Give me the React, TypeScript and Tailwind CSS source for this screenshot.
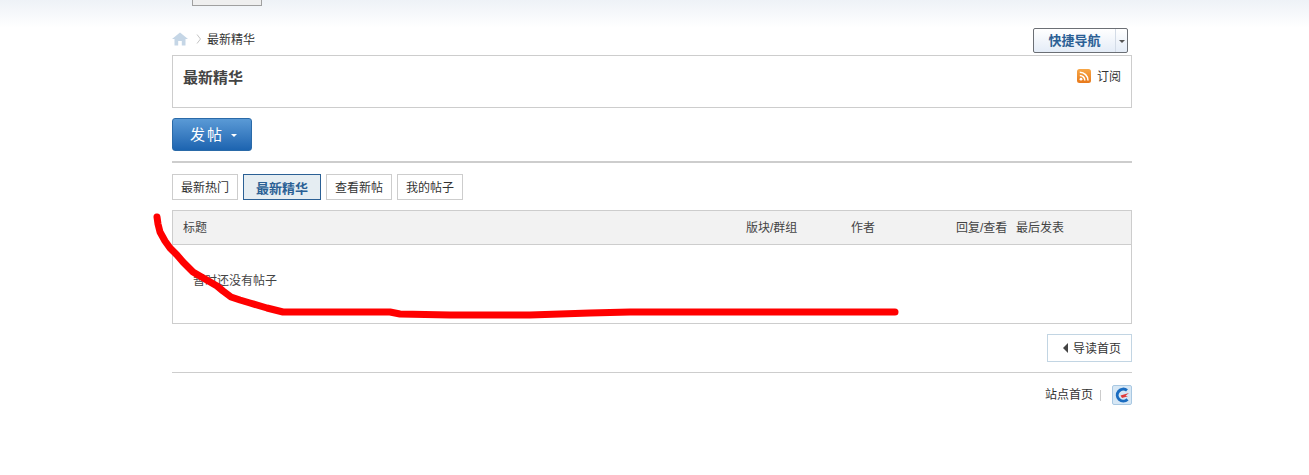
import React from "react";

const font = { fontFamily: '"Liberation Sans", "Noto Sans CJK SC", sans-serif' };

const stroke =
  "M157,217 L158,224 L160,232 L165,241 L170,248 L177,255 L183,262 L193,272 L205,279 L217,286 L223,291 L231,297 L240,300 L250,303 L267,308 L283,312 L320,312 L390,312 L400,314 L450,315 L530,315 L590,313 L630,312 L720,312 L895,312";

function Tab({ label, active, w }: { label: string; active?: boolean; w: string }) {
  return (
    <div
      className={
        active
          ? `${w} h-[26px] flex items-center justify-center pt-[2px] border border-[#2b6095] bg-[#e5edf2] text-[#2b6095] text-[13px] font-bold`
          : `${w} h-[26px] flex items-center justify-center pt-[2px] border border-[#cdcdcd] bg-white text-[#333]`
      }
    >
      {label}
    </div>
  );
}

export default function App() {
  return (
    <div
      style={font}
      className="relative h-[475px] overflow-hidden bg-white bg-gradient-to-b from-[#eef2f7] to-white bg-no-repeat bg-[length:100%_28px] text-[12px] leading-none text-[#333]"
    >
      <div className="ml-[172px] w-[960px]">
        <div className="h-[28px]">
          <div className="ml-[20px] w-[70px] h-[6px] border border-t-0 border-[#a0a0a0] bg-[#efefef]" />
        </div>

        <div className="h-[27px] flex items-start justify-between">
          <div className="flex items-center h-[24px]">
            <svg width="16" height="14" viewBox="0 0 16 14" className="-mt-[2px]">
              <path d="M8 0.5 L16 7 L13.5 7 L13.5 13.5 L9.8 13.5 L9.8 9 L6.2 9 L6.2 13.5 L2.5 13.5 L2.5 7 L0 7 Z" fill="#c5d6e6" />
            </svg>
            <svg width="6" height="10" viewBox="0 0 6 10" className="ml-[8px] -mt-[2px]">
              <path d="M1 0.5 L4.5 5 L1 9.5" fill="none" stroke="#c4c4c4" />
            </svg>
            <span className="ml-[5px] text-[#333]">最新精华</span>
          </div>
          <div className="mr-[4px] w-[95px] h-[25px] flex rounded-[2px] border border-[#6b6f75] bg-gradient-to-b from-white to-[#e4ecf7]">
            <div className="w-[81px] flex items-center justify-center font-bold text-[13px] text-[#2b6095]">快捷导航</div>
            <div className="flex-1 flex items-center justify-center border-l border-[#d3dbe6]">
              <div className="w-0 h-0 mt-[2px] border-x-[3px] border-x-transparent border-t-[3px] border-t-[#555]" />
            </div>
          </div>
        </div>

        <div className="h-[53px] border border-[#cdcdcd] bg-white flex justify-between items-start pt-[13px] pl-[10px] pr-[10px]">
          <div className="mt-[1px] text-[15px] leading-[16px] font-bold text-[#444]">最新精华</div>
          <div className="flex items-center">
            <svg width="14" height="14" viewBox="0 0 14 14">
              <defs>
                <linearGradient id="rss" x1="0" y1="0" x2="0" y2="1">
                  <stop offset="0" stopColor="#f7a748" />
                  <stop offset="1" stopColor="#e8791a" />
                </linearGradient>
              </defs>
              <rect x="0" y="0" width="14" height="14" rx="2.5" fill="url(#rss)" />
              <circle cx="4" cy="10.2" r="1.4" fill="#fff" />
              <path d="M2.8 6.4 A5 5 0 0 1 7.8 11.4" fill="none" stroke="#fff" strokeWidth="1.5" />
              <path d="M2.8 3.2 A8.2 8.2 0 0 1 11 11.4" fill="none" stroke="#fff" strokeWidth="1.5" />
            </svg>
            <span className="ml-[6px] pt-[2px] text-[#333]">订阅</span>
          </div>
        </div>

        <div className="mt-[10px] w-[80px] h-[33px] rounded-[3px] border border-[#2a6aa8] bg-gradient-to-b from-[#5a9ad6] to-[#1c64b0] flex items-center pl-[17px] text-white text-[15px] tracking-[2px]">
          <span>发帖</span>
          <div className="ml-[7px] mt-[2px] w-0 h-0 border-x-[3px] border-x-transparent border-t-[3px] border-t-white" />
        </div>

        <div className="mt-[10px] h-[2px] bg-[#cdcdcd]" />

        <div className="mt-[11px] flex gap-[5px]">
          <Tab label="最新热门" w="w-[66px]" />
          <Tab label="最新精华" w="w-[78px]" active />
          <Tab label="查看新帖" w="w-[66px]" />
          <Tab label="我的帖子" w="w-[66px]" />
        </div>

        <div className="mt-[10px] h-[114px] border border-[#cdcdcd] bg-white">
          <div className="h-[34px] flex items-center bg-[#f2f2f2] border-b border-[#cdcdcd] text-[#444] pt-[1px]">
            <div className="w-[573px] pl-[10px]">标题</div>
            <div className="w-[105px]">版块/群组</div>
            <div className="w-[105px]">作者</div>
            <div className="w-[60px]">回复/查看</div>
            <div>最后发表</div>
          </div>
          <div className="pl-[20px] pt-[30px] text-[#444]">暂时还没有帖子</div>
        </div>

        <div className="mt-[10px] flex justify-end">
          <div className="w-[85px] h-[28px] border border-[#c2d5e3] bg-white flex items-center pl-[15px] text-[#333]">
            <div className="w-0 h-0 border-y-[5px] border-y-transparent border-r-[5px] border-r-[#444]" />
            <span className="ml-[5px] pt-[2px]">导读首页</span>
          </div>
        </div>

        <div className="mt-[10px] h-[1px] bg-[#cdcdcd]" />

        <div className="mt-[12px] flex justify-end items-center h-[20px]">
          <span className="text-[#333]">站点首页</span>
          <div className="ml-[7px] w-[1px] h-[11px] bg-[#ccc]" />
          <svg width="20" height="20" viewBox="0 0 20 20" className="ml-[11px]">
            <rect x="0.5" y="0.5" width="19" height="19" rx="1.5" fill="#d6e7f5" stroke="#a9c8e2" />
            <path d="M15 5.4 A6 6 0 1 0 15.5 14.4" fill="none" stroke="#1a6cc0" strokeWidth="3" />
            <path d="M8.5 10.5 L17 8 L13.5 10.8 L16 11.2 L10 13 Z" fill="#e03a3a" />
          </svg>
        </div>
      </div>

      <svg width="1309" height="475" className="absolute left-0 top-0 pointer-events-none">
        <path d={stroke} fill="none" stroke="#ff0000" strokeWidth="7" strokeLinecap="round" strokeLinejoin="round" />
      </svg>
    </div>
  );
}
